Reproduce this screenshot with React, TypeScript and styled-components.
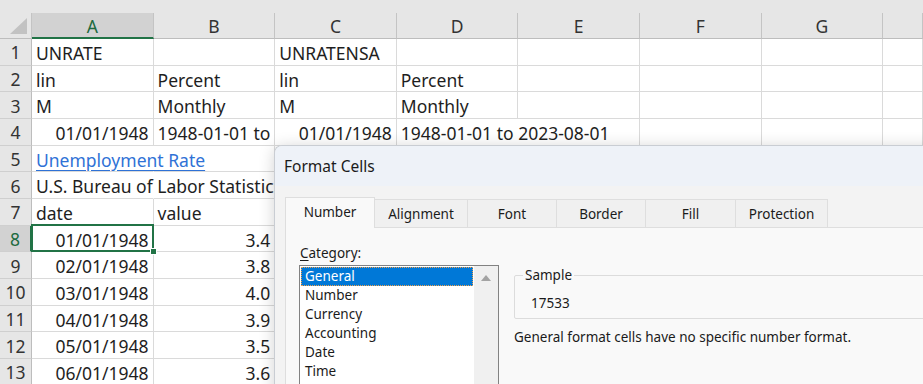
import React from 'react'
import styled, {createGlobalStyle, css} from 'styled-components'

type CellDef = {
    text?: string
    right?: boolean
    link?: boolean
    clip?: boolean
    spill?: boolean
    selected?: boolean
}

const columns = ['A', 'B', 'C', 'D', 'E', 'F', 'G', '']

const rows: CellDef[][] = [
    [{text: 'UNRATE'}, {}, {text: 'UNRATENSA'}, {}],
    [{text: 'lin'}, {text: 'Percent'}, {text: 'lin'}, {text: 'Percent'}],
    [{text: 'M'}, {text: 'Monthly'}, {text: 'M'}, {text: 'Monthly'}],
    [
        {text: '01/01/1948', right: true},
        {text: '1948-01-01 to', clip: true},
        {text: '01/01/1948', right: true},
        {text: '1948-01-01 to 2023-08-01', spill: true},
    ],
    [{text: 'Unemployment Rate', link: true, spill: true}],
    [{text: 'U.S. Bureau of Labor Statistics', spill: true}],
    [{text: 'date'}, {text: 'value'}],
    [{text: '01/01/1948', right: true, selected: true}, {text: '3.4', right: true}],
    [{text: '02/01/1948', right: true}, {text: '3.8', right: true}],
    [{text: '03/01/1948', right: true}, {text: '4.0', right: true}],
    [{text: '04/01/1948', right: true}, {text: '3.9', right: true}],
    [{text: '05/01/1948', right: true}, {text: '3.5', right: true}],
    [{text: '06/01/1948', right: true}, {text: '3.6', right: true}],
]

const activeRow = 8
const activeCol = 'A'

const tabs = [
    {label: 'Number', width: 90},
    {label: 'Alignment', width: 94},
    {label: 'Font', width: 90},
    {label: 'Border', width: 90},
    {label: 'Fill', width: 91},
    {label: 'Protection', width: 93},
]

const categories = ['General', 'Number', 'Currency', 'Accounting', 'Date', 'Time']

export default function App() {
    return (
        <Page>
            <GlobalStyle/>
            <TopStrip/>
            <Sheet>
                <Corner><CornerTriangle/></Corner>
                {columns.map((c, i) => (
                    <ColHead key={i} $active={c === activeCol}>{c}</ColHead>
                ))}
                {rows.map((row, r) => {
                    const rowNo = r + 1
                    return (
                        <React.Fragment key={rowNo}>
                            <RowHead $active={rowNo === activeRow}>{rowNo}</RowHead>
                            {columns.map((_, c) => {
                                const cell = row[c] ?? {}
                                let content: React.ReactNode = cell.text
                                if (cell.link) {
                                    content = <Link>{content}</Link>
                                }
                                if (cell.spill) {
                                    content = <Spill>{content}</Spill>
                                }
                                return (
                                    <Cell
                                        key={c}
                                        $right={!!cell.right}
                                        $clip={!!cell.clip}
                                        $spill={!!cell.spill}
                                        $selected={!!cell.selected}>
                                        {content}
                                        {cell.selected && (
                                            <>
                                                <SelectionFrame/>
                                                <FillHandle/>
                                            </>
                                        )}
                                    </Cell>
                                )
                            })}
                        </React.Fragment>
                    )
                })}
            </Sheet>

            <Dialog>
                <TitleBar>Format Cells</TitleBar>
                <DialogBody>
                    <TabStrip>
                        {tabs.map((t, i) => (
                            <Tab key={t.label} $active={i === 0} $width={t.width}>{t.label}</Tab>
                        ))}
                    </TabStrip>
                    <Pane>
                        <CategoryColumn>
                            <FieldLabel><u>C</u>ategory:</FieldLabel>
                            <ListBox>
                                <ListItems>
                                    {categories.map((c, i) => (
                                        <ListItem key={c} $selected={i === 0}>{c}</ListItem>
                                    ))}
                                </ListItems>
                                <ScrollTrack>
                                    <ArrowUp/>
                                </ScrollTrack>
                            </ListBox>
                        </CategoryColumn>
                        <DetailColumn>
                            <SampleBox>
                                <SampleLegend>Sample</SampleLegend>
                                <SampleValue>17533</SampleValue>
                            </SampleBox>
                            <Description>General format cells have no specific number format.</Description>
                        </DetailColumn>
                    </Pane>
                </DialogBody>
            </Dialog>
        </Page>
    )
}

const green = '#217346'
const gridLine = '#dadada'
const headBg = '#e6e6e6'
const headActiveBg = '#d2d2d2'

const GlobalStyle = createGlobalStyle`
    html, body {
        margin: 0;
        padding: 0;
        background: #ffffff;
    }
    body {
        font-family: "Noto Sans", "Liberation Sans", sans-serif;
    }
`

const Page = styled.div`
    position: relative;
    width: 923px;
    height: 384px;
    overflow: hidden;
    background: #ffffff;
    color: #1e1e1e;
`

const TopStrip = styled.div`
    height: 13px;
    background: ${headBg};
`

const Sheet = styled.div`
    display: grid;
    grid-template-columns: 32px repeat(7, 121.6px) 1fr;
    grid-template-rows: 26px;
    grid-auto-rows: 26.67px;
    font-size: 17.5px;
`

const Corner = styled.div`
    display: flex;
    align-items: flex-end;
    justify-content: flex-end;
    padding: 0 4px 4px 0;
    background: ${headBg};
    border-right: 1px solid #c4c4c4;
    border-bottom: 1px solid #bdbdbd;
    box-sizing: border-box;
`

const CornerTriangle = styled.div`
    width: 0;
    height: 0;
    border-left: 17px solid transparent;
    border-bottom: 16px solid #c2c2c2;
`

const ColHead = styled.div<{ $active: boolean }>`
    display: flex;
    align-items: center;
    justify-content: center;
    box-sizing: border-box;
    background: ${({$active}) => $active ? headActiveBg : headBg};
    color: ${({$active}) => $active ? '#1d6a40' : '#333333'};
    border-right: 1px solid #c4c4c4;
    border-bottom: ${({$active}) => $active ? `2px solid ${green}` : '1px solid #bdbdbd'};
    padding-top: ${({$active}) => $active ? '1px' : '0'};
`

const RowHead = styled.div<{ $active: boolean }>`
    display: flex;
    align-items: center;
    justify-content: center;
    box-sizing: border-box;
    padding-top: 1px;
    background: ${({$active}) => $active ? headActiveBg : headBg};
    color: ${({$active}) => $active ? '#1d6a40' : '#333333'};
    border-bottom: 1px solid #cfcfcf;
    border-right: ${({$active}) => $active ? `2px solid ${green}` : '1px solid #bdbdbd'};
`

const Cell = styled.div<{ $right: boolean, $clip: boolean, $spill: boolean, $selected: boolean }>`
    box-sizing: border-box;
    padding: 1px 4px 0;
    line-height: 26px;
    white-space: nowrap;
    background: #ffffff;
    text-align: ${({$right}) => $right ? 'right' : 'left'};
    overflow: ${({$clip}) => $clip ? 'hidden' : 'visible'};
    border-bottom: 1px solid ${gridLine};
    border-right: 1px solid ${({$spill}) => $spill ? '#ffffff' : gridLine};
    ${({$selected}) => $selected && css`
        position: relative;
    `}
`

/* text that runs on over the empty neighbouring cells */
const Spill = styled.span`
    position: relative;
    z-index: 1;
`

const Link = styled.span`
    color: #2f72d6;
    text-decoration: underline;
    text-underline-offset: 3px;
`

const SelectionFrame = styled.div`
    position: absolute;
    top: -2px;
    left: -1px;
    right: -1px;
    bottom: -1px;
    border: 2px solid ${green};
    pointer-events: none;
`

const FillHandle = styled.div`
    position: absolute;
    right: -4px;
    bottom: -4px;
    width: 5px;
    height: 5px;
    background: ${green};
    border: 1px solid #ffffff;
`

const Dialog = styled.div`
    position: absolute;
    z-index: 2;
    left: 274px;
    top: 145px;
    width: 720px;
    height: 280px;
    background: #f3f3f3;
    border: 1px solid #c9cdd3;
    border-right: none;
    border-bottom: none;
    border-radius: 8px 0 0 0;
    box-shadow: 0 2px 16px rgba(0, 0, 0, 0.18);
    overflow: hidden;
    font-size: 13.5px;
    color: #1b1b1b;
`

const TitleBar = styled.div`
    height: 40px;
    display: flex;
    align-items: center;
    padding-left: 9px;
    background: #eef2f8;
    font-size: 15.5px;
`

const DialogBody = styled.div`
    padding: 11px 0 0 10px;
`

const TabStrip = styled.div`
    display: flex;
    align-items: flex-end;
    height: 30px;
`

const Tab = styled.div<{ $active: boolean, $width: number }>`
    position: relative;
    z-index: ${({$active}) => $active ? 1 : 0};
    display: flex;
    align-items: center;
    justify-content: center;
    box-sizing: border-box;
    width: ${({$width}) => $width}px;
    height: ${({$active}) => $active ? 31 : 28}px;
    margin-left: -1px;
    margin-bottom: ${({$active}) => $active ? -1 : 0}px;
    padding-bottom: ${({$active}) => $active ? 2 : 0}px;
    background: ${({$active}) => $active ? '#f9f9f9' : '#f0f0f0'};
    border: 1px solid #dedede;
    border-bottom: none;
    &:first-child {
        margin-left: 0;
    }
`

const Pane = styled.div`
    display: flex;
    height: 200px;
    padding: 16px 0 0 13px;
    background: #f9f9f9;
    border: 1px solid #dedede;
`

const CategoryColumn = styled.div`
    display: flex;
    flex-direction: column;
    width: 200px;
`

const FieldLabel = styled.div`
    line-height: 18px;
    margin-bottom: 3px;
    padding-left: 1px;
    u {
        text-underline-offset: 2px;
    }
`

const ListBox = styled.div`
    display: flex;
    box-sizing: border-box;
    height: 160px;
    background: #ffffff;
    border: 1px solid #828282;
`

const ListItems = styled.div`
    flex: 1;
    padding: 1px;
`

const ListItem = styled.div<{ $selected: boolean }>`
    box-sizing: border-box;
    height: 19px;
    line-height: 19px;
    padding-left: 4px;
    ${({$selected}) => $selected && css`
        background: #0078d7;
        color: #ffffff;
        outline: 1px dotted #f0a04b;
        outline-offset: -1px;
    `}
`

const ScrollTrack = styled.div`
    width: 24px;
    display: flex;
    justify-content: center;
    padding-top: 9px;
    background: #f0f0f0;
`

const ArrowUp = styled.div`
    width: 0;
    height: 0;
    border-left: 5px solid transparent;
    border-right: 5px solid transparent;
    border-bottom: 6px solid #a3a3a3;
`

const DetailColumn = styled.div`
    display: flex;
    flex-direction: column;
    margin-left: 15px;
    padding-top: 22px;
`

const SampleBox = styled.fieldset`
    width: 460px;
    margin: 0;
    padding: 10px 0 6px 16px;
    border: 1px solid #dcdcdc;
    border-radius: 2px;
`

const SampleLegend = styled.legend`
    margin-left: -8px;
    padding: 0 2px;
    line-height: 18px;
`

const SampleValue = styled.div`
    line-height: 18px;
`

const Description = styled.div`
    margin-top: 9px;
    line-height: 18px;
`
